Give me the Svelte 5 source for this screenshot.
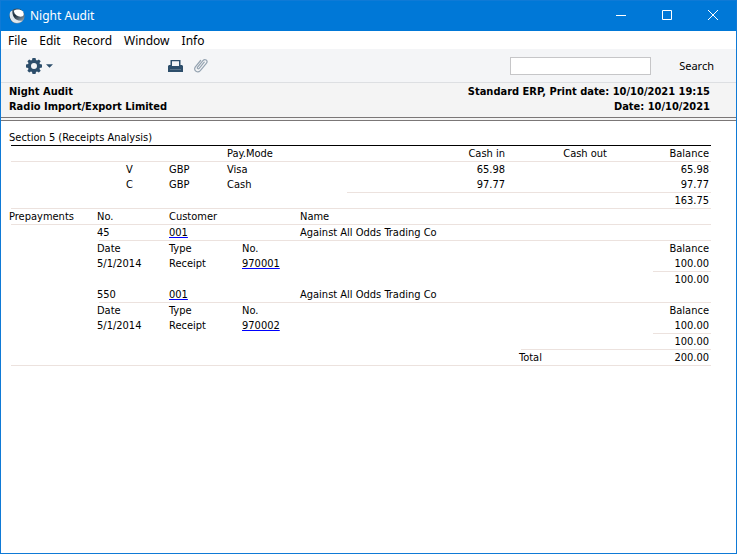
<script>
  const menus = ['File', 'Edit', 'Record', 'Window', 'Info'];
  const modes = [
    { code: 'V', currency: 'GBP', name: 'Visa', cashIn: '65.98', balance: '65.98' },
    { code: 'C', currency: 'GBP', name: 'Cash', cashIn: '97.77', balance: '97.77' }
  ];
  const prepayments = [
    { no: '45', customer: '001', name: 'Against All Odds Trading Co', date: '5/1/2014', receipt: '970001', amount: '100.00' },
    { no: '550', customer: '001', name: 'Against All Odds Trading Co', date: '5/1/2014', receipt: '970002', amount: '100.00' }
  ];
  let query = $state('');
</script>

<div class="window">
  <header class="titlebar">
    <svg class="logo" viewBox="0 0 16 16" aria-hidden="true">
      <defs>
        <linearGradient id="shell" x1="0" y1="0" x2=".7" y2="1">
          <stop offset="0" stop-color="#4a6072" />
          <stop offset=".5" stop-color="#1d3040" />
          <stop offset="1" stop-color="#9aa8b4" />
        </linearGradient>
      </defs>
      <circle cx="8" cy="8" r="7.600" fill="url(#shell)" />
      <path d="M1 4.500C.2 8 .8 11.400 4 14 7 15.900 11 15.300 13.600 12.600 10 13.400 6.500 12 4.800 9 3.600 7 3.200 5 3.400 2.600 2.200 3 1.400 3.600 1 4.500Z" fill="#dfe7ee" />
      <path d="M4.800 2.600C7 1 11.600 .8 13.800 3.200 15.400 5.600 15 8 12.800 8.600 9.400 9 5.200 7.400 4.800 2.600Z" fill="#fff" />
    </svg>
    <h1>Night Audit</h1>
    <div class="controls">
      <button aria-label="Minimize"><svg viewBox="0 0 12 12"><path d="M1 5.500H11" /></svg></button>
      <button aria-label="Maximize"><svg viewBox="0 0 12 12"><path d="M1.500 .5H10.500V9.500H1.500Z" /></svg></button>
      <button aria-label="Close"><svg viewBox="0 0 12 12"><path d="M1 0L11 10M11 0L1 10" /></svg></button>
    </div>
  </header>

  <nav class="menubar">
    {#each menus as menu}<button>{menu}</button>{/each}
  </nav>

  <div class="toolbar">
    <button class="gear" aria-label="Operations">
      <svg width="16" height="16" viewBox="0 0 16 16">
        <path fill="#2d4e6b" fill-rule="evenodd" d="M6.500 0H9.500L10 2.100 11 2.600 12.900 1.400 14.700 3.200 13.500 5.100 13.900 6.100 16 6.500V9.500L13.900 10 13.500 11 14.700 12.800 12.900 14.600 11 13.500 10 13.900 9.500 16H6.500L6 13.900 5 13.500 3.200 14.600 1.400 12.800 2.500 11 2.100 10 0 9.500V6.500L2.100 6.100 2.500 5.100 1.400 3.200 3.200 1.400 5 2.600 6 2.100ZM8 5A3 3 0 1 0 8 11A3 3 0 1 0 8 5Z" />
      </svg>
      <svg width="7" height="4" viewBox="0 0 8 4"><path fill="#2d4e6b" d="M0 0H8L4 4Z" /></svg>
    </button>
    <button class="print" aria-label="Print">
      <svg width="15" height="14" viewBox="0 0 15 14">
        <path fill="#2d4e6b" fill-rule="evenodd" d="M2.500 1H12.500V6H14L15 7V13H0V7L1 6H2.500ZM4 2.300V7H11V2.300Z" />
        <path fill="#5a748b" d="M2 10H13V11H2Z" />
      </svg>
    </button>
    <button class="attach" aria-label="Attachments">
      <svg width="14" height="15" viewBox="0 0 14 15" fill="none" stroke="#95a3b1" stroke-width="1.200" stroke-linecap="round">
        <path d="M10.200 4.200L5.200 10.300C4.200 11.500 2.700 10.400 3.600 9.100L8.900 2.600C11 .2 14.300 2.500 12.500 5.200L6.300 12.600C3.600 15.600-.7 12.600 1.200 9.100L6.600 2.500" />
      </svg>
    </button>
    <div class="search">
      <input id="search" type="text" bind:value={query} />
      <label for="search">Search</label>
    </div>
  </div>

  <section class="heading">
    <p>Night Audit<br />Radio Import/Export Limited</p>
    <p class="right">Standard ERP, Print date: 10/10/2021 19:15<br />Date: 10/10/2021</p>
  </section>

  <main>
    <h2>Section 5 (Receipts Analysis)</h2>
    <table class="analysis">
      <colgroup><col class="code" /><col class="currency" /><col class="mode" /><col /><col class="in" /><col class="sum" /><col class="sum" /></colgroup>
      <thead>
        <tr class="line">
          <th></th><th></th><th></th><th>Pay.Mode</th><th class="num">Cash in</th><th class="num">Cash out</th><th class="num">Balance</th>
        </tr>
      </thead>
      <tbody>
        {#each modes as mode, i}
          {@const last = i === modes.length - 1}
          <tr>
            <td></td><td>{mode.code}</td><td>{mode.currency}</td><td>{mode.name}</td>
            <td class="num" class:rule={last}>{mode.cashIn}</td>
            <td class="num" class:rule={last}></td>
            <td class="num" class:rule={last}>{mode.balance}</td>
          </tr>
        {/each}
        <tr class="line"><td colspan="6"></td><td class="num">163.75</td></tr>
      </tbody>
    </table>

    <table class="prepayments">
      <colgroup><col class="group" /><col class="no" /><col class="customer" /><col class="ref" /><col /><col class="total" /><col class="amount" /></colgroup>
      <thead>
        <tr class="line"><th>Prepayments</th><th>No.</th><th>Customer</th><th></th><th colspan="3">Name</th></tr>
      </thead>
      <tbody>
        {#each prepayments as item, i}
          {@const last = i === prepayments.length - 1}
          <tr>
            <td></td><td class="rule">{item.no}</td>
            <td class="rule"><a href="#customer">{item.customer}</a></td>
            <td class="rule"></td><td class="rule" colspan="3">{item.name}</td>
          </tr>
          <tr><td></td><td>Date</td><td>Type</td><td colspan="3">No.</td><td class="num">Balance</td></tr>
          <tr>
            <td></td><td>{item.date}</td><td>Receipt</td>
            <td colspan="3"><a href="#receipt">{item.receipt}</a></td>
            <td class="num rule">{item.amount}</td>
          </tr>
          <tr><td colspan="5"></td><td class:rule={last}></td><td class="num" class:rule={last}>{item.amount}</td></tr>
        {/each}
      </tbody>
      <tfoot>
        <tr class="line"><td colspan="5"></td><td>Total</td><td class="num">200.00</td></tr>
      </tfoot>
    </table>
  </main>
</div>

<style>
  .window {
    box-sizing: border-box;
    min-height: 100vh;
    border: 1px solid #0f7ad6;
    background: #fff;
    color: #000;
    font: 11px/15px "DejaVu Sans Condensed", "DejaVu Sans", Tahoma, sans-serif;
  }
  h1, h2, p { margin: 0; font-weight: normal; }
  button { padding: 0; border: 0; background: none; color: inherit; font: inherit; }
  svg { display: block; }

  .titlebar { display: flex; align-items: center; height: 30px; padding-left: 8px; background: #0078d7; color: #fff; }
  .logo { width: 16px; height: 16px; }
  h1 { margin-left: 5px; font: 12px/16px "Noto Sans", sans-serif; }
  .controls { display: flex; height: 100%; margin-left: auto; }
  .controls button { display: flex; align-items: center; justify-content: center; width: 46px; }
  .controls svg { width: 12px; height: 12px; fill: none; stroke: #fff; stroke-width: 1; }

  .menubar { display: flex; gap: 12px; height: 18px; padding-left: 7px; font: 12px/20px "Noto Sans", sans-serif; }

  .toolbar { display: flex; align-items: center; height: 33px; border-bottom: 1px solid #dddfe2; background: #f4f5f7; }
  .gear { display: flex; align-items: center; gap: 4px; margin-left: 25px; }
  .print { margin-left: 115px; }
  .attach { margin-left: 11px; }
  .search { display: flex; align-items: center; gap: 28px; margin-left: auto; padding-right: 22px; font: 11px/16px "Noto Sans", sans-serif; }
  .search input { box-sizing: border-box; width: 141px; height: 18px; padding: 0 4px; border: 1px solid #c6c6c8; background: #fff; font: inherit; }

  .heading { display: flex; justify-content: space-between; height: 34px; padding: 0 26px 0 8px; border-bottom: 4px double #7b7777; background: #f4f4f4; }
  .heading p { padding-top: 1px; font-weight: bold; }
  .heading .right { text-align: right; }

  main { padding: 9px 25px 8px 10px; }
  h2 { font-size: 11px; line-height: 15px; text-indent: -2px; }
  table { width: 100%; table-layout: fixed; border-collapse: separate; border-spacing: 0; }
  .analysis { border-top: 1px solid #000; }
  th, td { height: 15px; padding: 0; font-weight: normal; line-height: 15px; text-align: left; text-indent: -2px; vertical-align: top; white-space: nowrap; }
  .num { padding-right: 2px; text-align: right; }
  .line > *, .rule { border-bottom: 1px solid #ece2de; }
  a { color: inherit; text-decoration: underline 1px #0000ff; text-underline-offset: 1px; text-decoration-skip-ink: none; }

  .code { width: 117px; }
  .currency { width: 43px; }
  .mode { width: 58px; }
  .in { width: 160px; }
  .sum { width: 102px; }
  .group { width: 88px; }
  .no { width: 72px; }
  .customer { width: 73px; }
  .ref { width: 58px; }
  .total { width: 132px; }
  .amount { width: 58px; }
</style>
